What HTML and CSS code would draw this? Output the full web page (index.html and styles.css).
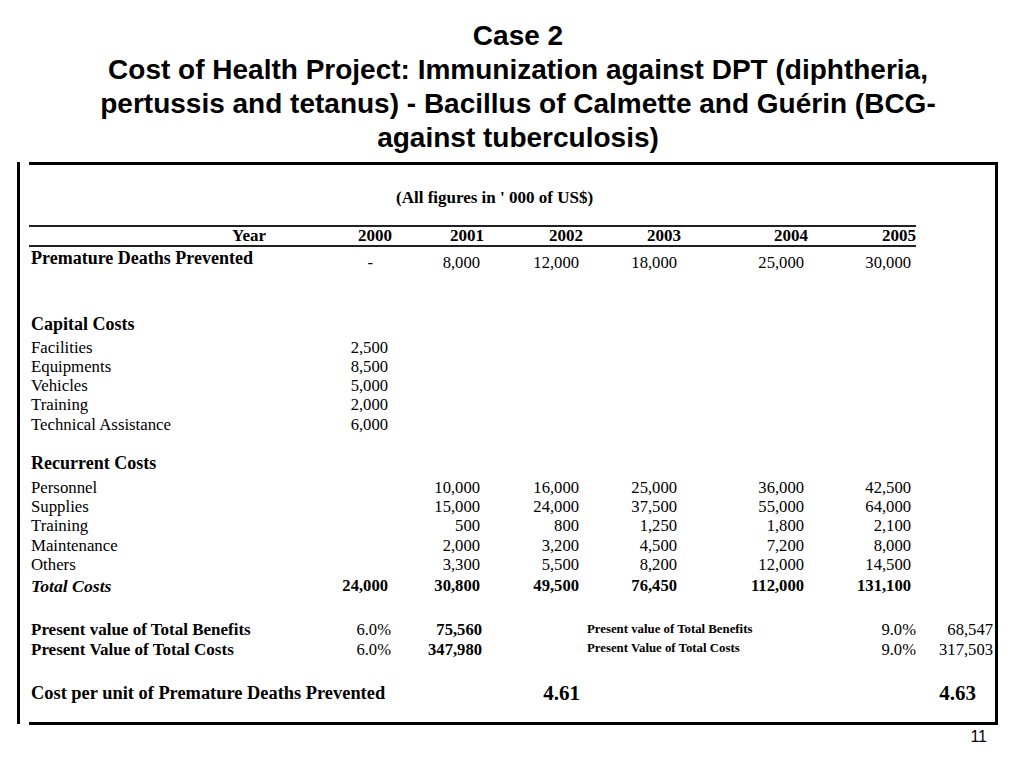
FILE: index.html
```html
<!DOCTYPE html>
<html>
<head>
<meta charset="utf-8">
<title>Case 2</title>
<link rel="stylesheet" href="styles.css">
</head>
<body>
<div class="slide">
  <h1 class="title">Case 2<br>Cost of Health Project: Immunization against DPT (diphtheria,<br>pertussis and tetanus) - Bacillus of Calmette and Guérin (BCG-<br>against tuberculosis)</h1>
  <div class="frame">
    <div class="rule-left"></div>
    <div class="sheet">
      <div class="row r-note"><span class="note">(All figures in ' 000 of US$)</span></div>

      <div class="row r-head">
        <span class="hd">Year</span>
        <span class="hd">2000</span>
        <span class="hd">2001</span>
        <span class="hd">2002</span>
        <span class="hd">2003</span>
        <span class="hd">2004</span>
        <span class="hd">2005</span>
      </div>

      <div class="row r-deaths">
        <span class="sec lift">Premature Deaths Prevented</span>
        <span class="n dash">-</span>
        <span class="n">8,000</span>
        <span class="n">12,000</span>
        <span class="n">18,000</span>
        <span class="n">25,000</span>
        <span class="n">30,000</span>
      </div>

      <div class="row r-sec r-cap"><span class="sec">Capital Costs</span></div>
      <div class="group g-cap">
        <div class="row r-item"><span class="lab">Facilities</span><span class="n">2,500</span></div>
        <div class="row r-item"><span class="lab">Equipments</span><span class="n">8,500</span></div>
        <div class="row r-item"><span class="lab">Vehicles</span><span class="n">5,000</span></div>
        <div class="row r-item"><span class="lab">Training</span><span class="n">2,000</span></div>
        <div class="row r-item"><span class="lab">Technical Assistance</span><span class="n">6,000</span></div>
      </div>

      <div class="row r-sec r-rec"><span class="sec">Recurrent Costs</span></div>
      <div class="group g-rec">
        <div class="row r-item"><span class="lab">Personnel</span><span></span><span class="n">10,000</span><span class="n">16,000</span><span class="n">25,000</span><span class="n">36,000</span><span class="n">42,500</span></div>
        <div class="row r-item"><span class="lab">Supplies</span><span></span><span class="n">15,000</span><span class="n">24,000</span><span class="n">37,500</span><span class="n">55,000</span><span class="n">64,000</span></div>
        <div class="row r-item"><span class="lab">Training</span><span></span><span class="n">500</span><span class="n">800</span><span class="n">1,250</span><span class="n">1,800</span><span class="n">2,100</span></div>
        <div class="row r-item"><span class="lab">Maintenance</span><span></span><span class="n">2,000</span><span class="n">3,200</span><span class="n">4,500</span><span class="n">7,200</span><span class="n">8,000</span></div>
        <div class="row r-item"><span class="lab">Others</span><span></span><span class="n">3,300</span><span class="n">5,500</span><span class="n">8,200</span><span class="n">12,000</span><span class="n">14,500</span></div>
      </div>

      <div class="row r-total">
        <span class="tot">Total Costs</span>
        <span class="n b">24,000</span>
        <span class="n b">30,800</span>
        <span class="n b">49,500</span>
        <span class="n b">76,450</span>
        <span class="n b">112,000</span>
        <span class="n b">131,100</span>
      </div>

      <div class="group g-pv">
        <div class="row r-pv">
          <span class="pvl">Present value of Total Benefits</span>
          <span class="n pct">6.0%</span>
          <span class="n b pvv">75,560</span>
          <span></span>
          <span class="small">Present value of Total Benefits</span>
          <span class="n pct2">9.0%</span>
          <span class="n last">68,547</span>
        </div>
        <div class="row r-pv">
          <span class="pvl">Present Value of Total Costs</span>
          <span class="n pct">6.0%</span>
          <span class="n b pvv">347,980</span>
          <span></span>
          <span class="small">Present Value of Total Costs</span>
          <span class="n pct2">9.0%</span>
          <span class="n last">317,503</span>
        </div>
      </div>

      <div class="row r-cost">
        <span class="costl">Cost per unit of Premature Deaths Prevented</span>
        <span class="n big r1">4.61</span>
        <span class="n big r2">4.63</span>
      </div>
    </div>
  </div>
  <div class="pagenum">11</div>
</div>
</body>
</html>
```

FILE: styles.css
```css
html, body {
  margin: 0;
  padding: 0;
  background: #ffffff;
}

body {
  font-family: "Liberation Serif", "Times New Roman", serif;
  color: #000000;
  width: 1024px;
  height: 768px;
  overflow: hidden;
}

.slide {
  width: 1024px;
  height: 768px;
}

.title {
  margin: 0 0 0 14px;
  padding-top: 19px;
  font-family: "Liberation Sans", Arial, sans-serif;
  font-weight: bold;
  font-size: 28px;
  line-height: 34px;
  text-align: center;
  width: 1008px;
}

.frame {
  display: flex;
  margin-top: 7px;
  height: 563px;
}

.rule-left {
  width: 3px;
  height: 562px;
  margin-left: 17px;
  background: #000;
}

.sheet {
  margin-left: 9px;
  width: 969px;
  height: 563px;
  box-sizing: border-box;
  border-top: 3px solid #000;
  border-right: 3px solid #000;
  border-bottom: 3px solid #000;
  padding-top: 23px;
  display: flex;
  flex-direction: column;
}

.row {
  display: grid;
  grid-template-columns: 237px 126px 92px 99px 98px 127px 107px 80px;
  white-space: nowrap;
}

.n {
  text-align: right;
  padding-right: 4px;
  font-size: 16.6px;
}

.b {
  font-weight: bold;
}

/* note row */
.r-note {
  height: 20px;
  line-height: 20px;
}

.note {
  grid-column: 3;
  padding-left: 4px;
  font-weight: bold;
  font-size: 17px;
}

/* header row */
.r-head {
  margin-top: 17px;
  width: 887px;
  grid-template-columns: 237px 126px 92px 99px 98px 127px 108px;
  border-top: 2px solid #222;
  border-bottom: 2px solid #222;
  height: 22px;
  box-sizing: border-box;
  line-height: 18px;
}

.hd {
  text-align: right;
  font-weight: bold;
  font-size: 17px;
}

/* premature deaths */
.r-deaths {
  height: 26px;
  align-items: end;
  line-height: 21px;
}

.sec {
  font-weight: bold;
  font-size: 18px;
  padding-left: 2px;
}

.lift {
  padding-bottom: 4px;
}

.dash {
  padding-right: 19px;
}

/* section headings */
.r-sec {
  height: 20px;
  line-height: 20px;
}

.r-cap {
  margin-top: 41px;
}

.r-rec {
  margin-top: 19px;
}

.group {
  display: flex;
  flex-direction: column;
}

.g-cap {
  margin-top: 3.5px;
}

.g-rec {
  margin-top: 5px;
}

.r-item {
  height: 19.25px;
  line-height: 19.25px;
}

.lab {
  font-size: 16.8px;
  padding-left: 2px;
}

/* totals */
.r-total {
  margin-top: 1px;
  height: 22px;
  line-height: 22px;
}

.tot {
  font-weight: bold;
  font-style: italic;
  font-size: 17.7px;
  padding-left: 2px;
}

/* present values */
.g-pv {
  margin-top: 23px;
}

.r-pv {
  height: 19.5px;
  line-height: 19.5px;
  align-items: end;
}

.pvl {
  font-weight: bold;
  font-size: 17px;
  padding-left: 2px;
}

.pct {
  padding-right: 1px;
}

.pvv {
  padding-right: 2px;
}

.small {
  grid-column: 5 / span 2;
  padding-left: 4px;
  font-weight: bold;
  font-size: 12.8px;
  line-height: 17px;
  padding-bottom: 2px;
}

.pct2 {
  padding-right: 0;
  margin-right: -1px;
}

.last {
  padding-right: 2px;
}

/* cost per unit */
.r-cost {
  margin-top: 21.5px;
  height: 24px;
  line-height: 24px;
}

.costl {
  grid-column: 1 / span 3;
  font-weight: bold;
  font-size: 18.4px;
  padding-left: 2px;
}

.big {
  font-weight: bold;
  font-size: 21px;
}

.r1 {
  grid-column: 4;
  padding-right: 3px;
}

.r2 {
  grid-column: 8;
  padding-right: 19px;
}

.pagenum {
  margin-top: 4px;
  padding-right: 37px;
  text-align: right;
  font-family: "Liberation Sans", Arial, sans-serif;
  font-size: 16px;
  line-height: 16px;
}
```
